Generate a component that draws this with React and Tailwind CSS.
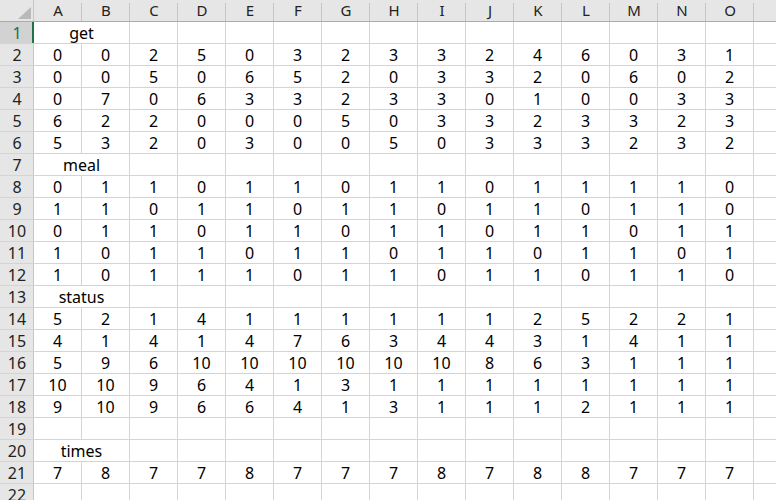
import React from "react";

const cols = ["A", "B", "C", "D", "E", "F", "G", "H", "I", "J", "K", "L", "M", "N", "O"];

const rows = [
  { label: "get" },
  [0, 0, 2, 5, 0, 3, 2, 3, 3, 2, 4, 6, 0, 3, 1],
  [0, 0, 5, 0, 6, 5, 2, 0, 3, 3, 2, 0, 6, 0, 2],
  [0, 7, 0, 6, 3, 3, 2, 3, 3, 0, 1, 0, 0, 3, 3],
  [6, 2, 2, 0, 0, 0, 5, 0, 3, 3, 2, 3, 3, 2, 3],
  [5, 3, 2, 0, 3, 0, 0, 5, 0, 3, 3, 3, 2, 3, 2],
  { label: "meal" },
  [0, 1, 1, 0, 1, 1, 0, 1, 1, 0, 1, 1, 1, 1, 0],
  [1, 1, 0, 1, 1, 0, 1, 1, 0, 1, 1, 0, 1, 1, 0],
  [0, 1, 1, 0, 1, 1, 0, 1, 1, 0, 1, 1, 0, 1, 1],
  [1, 0, 1, 1, 0, 1, 1, 0, 1, 1, 0, 1, 1, 0, 1],
  [1, 0, 1, 1, 1, 0, 1, 1, 0, 1, 1, 0, 1, 1, 0],
  { label: "status" },
  [5, 2, 1, 4, 1, 1, 1, 1, 1, 1, 2, 5, 2, 2, 1],
  [4, 1, 4, 1, 4, 7, 6, 3, 4, 4, 3, 1, 4, 1, 1],
  [5, 9, 6, 10, 10, 10, 10, 10, 10, 8, 6, 3, 1, 1, 1],
  [10, 10, 9, 6, 4, 1, 3, 1, 1, 1, 1, 1, 1, 1, 1],
  [9, 10, 9, 6, 6, 4, 1, 3, 1, 1, 1, 2, 1, 1, 1],
  [],
  { label: "times" },
  [7, 8, 7, 7, 8, 7, 7, 7, 8, 7, 8, 8, 7, 7, 7],
  [],
];

const font = { fontFamily: '"Noto Sans", "Liberation Sans", sans-serif' };

function Cell({ children }) {
  return (
    <div className="w-[48px] h-[22px] shrink-0 border-r border-b border-[#d4d4d4] flex items-center justify-center">
      {children}
    </div>
  );
}

function RowHead({ n, active }) {
  return (
    <div
      className={`w-[34px] h-[22px] shrink-0 border-b border-[#d4d4d4] flex items-center justify-center relative ${
        active ? "bg-[#d2d2d2] text-[#217346]" : "bg-[#e6e6e6] text-[#222]"
      }`}
    >
      {n}
      <div
        className={`absolute right-0 top-0 h-full ${
          active ? "w-[2px] bg-[#217346]" : "w-[1px] bg-[#c6c6c6]"
        }`}
      />
    </div>
  );
}

export default function App() {
  return (
    <div
      className="w-[776px] h-[500px] overflow-hidden bg-white text-[16px] leading-none text-black"
      style={font}
    >
      <div className="flex h-[22px] bg-[#e6e6e6] border-b border-[#ababab] text-[15px]">
        <div className="w-[34px] h-full shrink-0 border-r border-[#c6c6c6] relative">
          <svg className="absolute left-[18px] top-[7px]" width="13" height="12" viewBox="0 0 13 12">
            <polygon points="13,0 13,12 0,12" fill="#b9b9b9" />
          </svg>
        </div>
        {cols.map((c) => (
          <div key={c} className="w-[48px] h-full shrink-0 flex items-center justify-center text-[#222] relative">
            {c}
            <div className="absolute right-0 top-[3px] bottom-0 w-[1px] bg-[#c6c6c6]" />
          </div>
        ))}
        <div className="flex-1" />
      </div>
      {rows.map((r, i) => (
        <div key={i} className="flex">
          <RowHead n={i + 1} active={i === 0} />
          {Array.isArray(r) ? (
            cols.map((c, j) => <Cell key={c}>{r[j] !== undefined ? r[j] : ""}</Cell>)
          ) : (
            <>
              <div className="w-[96px] h-[22px] shrink-0 border-r border-b border-[#d4d4d4] flex items-center justify-center">
                {r.label}
              </div>
              {cols.slice(2).map((c) => (
                <Cell key={c} />
              ))}
            </>
          )}
          <div className="flex-1 h-[22px] border-b border-[#d4d4d4]" />
        </div>
      ))}
    </div>
  );
}
